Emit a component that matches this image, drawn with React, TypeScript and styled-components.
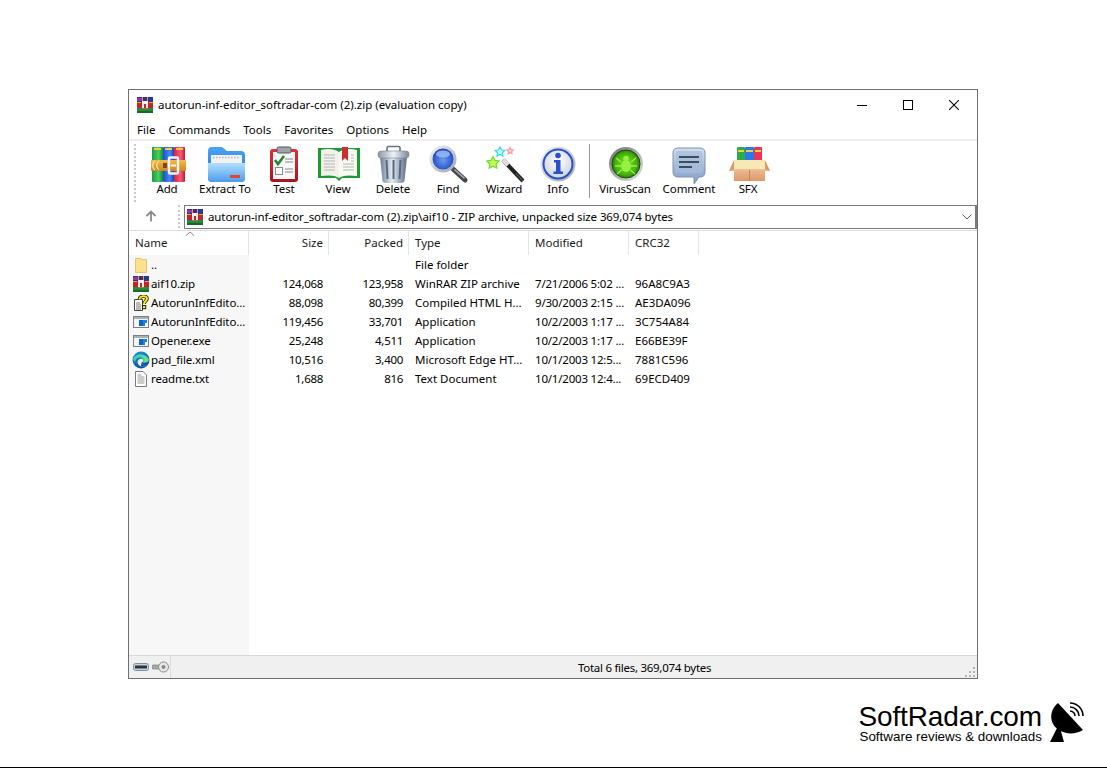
import React from "react";
import styled, { createGlobalStyle } from "styled-components";

const Global = createGlobalStyle`
  html, body { margin: 0; padding: 0; background: #fff; }
  body { font-family: "Noto Sans", "Open Sans", sans-serif; font-size: 11.5px; color: #000; }
  * { box-sizing: border-box; }
`;

const Page = styled.div`
  width: 1107px; height: 769px; padding: 89px 0 1px 128px;
  display: flex; flex-direction: column; overflow: hidden; background: #fff;
`;
const Win = styled.div`
  width: 850px; height: 590px; flex: none; border: 1px solid #6f6f6f;
  display: flex; flex-direction: column; background: #fff;
`;
const TitleBar = styled.div`
  height: 30px; flex: none; display: flex; align-items: center; padding-left: 8px;
`;
const TitleText = styled.div`
  margin-left: 5px; flex: 1; white-space: nowrap; padding-bottom: 1px;
`;
const WinBtn = styled.div`
  width: 46px; height: 30px; display: flex; align-items: center; justify-content: center;
`;
const MenuBar = styled.div`
  height: 19px; flex: none; display: flex; align-items: center; padding-left: 8px; gap: 13px;
`;
const Band = styled.div` height: 2px; flex: none; background: #f0f0f0; `;
const ToolBar = styled.div`
  height: 63px; flex: none; display: flex; padding-left: 5px; align-items: stretch;
`;
const Grip = styled.div`
  width: 2px; flex: none; border-left: 2px dotted #c8c8c8; margin: 3px 6px 2px 0;
`;
const ToolBtn = styled.div<{ $w: number }>`
  width: ${p => p.$w}px; flex: none; display: flex; flex-direction: column; align-items: center;
  padding-top: 4px; letter-spacing: -0.1px; white-space: nowrap;
  svg { display: block; flex: none; }
`;
const ToolLabel = styled.span` line-height: 16px; margin-top: -4px; `;
const ToolSep = styled.div`
  width: 1px; flex: none; margin: 3px 4px 6px 5px; background: #9a9a9a;
`;
const AddressRow = styled.div`
  height: 27px; flex: none; display: flex; align-items: stretch; border-bottom: 1px solid #dcdcdc;
`;
const UpCell = styled.div`
  width: 49px; flex: none; display: flex; align-items: center; justify-content: center; padding: 0 5px 2px 0;
`;
const AddrGrip = styled(Grip)` margin: 1px 4px 2px 0; `;
const AddrBox = styled.div`
  flex: 1; height: 24px; margin-top: 1px; border: 1px solid #7a7a7a; border-right-width: 2px;
  display: flex; align-items: center; padding-left: 2px; gap: 5px; background: #fff;
  letter-spacing: -0.1px; white-space: nowrap;
`;
const AddrText = styled.span` flex: 1; padding-bottom: 1px; `;
const AddrChevron = styled.svg` margin-right: 3px; `;

const COLS = "120px 80px 80px 120px 100px 70px";
const Header = styled.div`
  position: relative; height: 24px; flex: none; display: grid; grid-template-columns: ${COLS};
`;
const HCell = styled.div<{ $right?: boolean }>`
  display: flex; align-items: center; border-right: 1px solid #e5e5e5;
  justify-content: ${p => (p.$right ? "flex-end" : "flex-start")};
  padding: ${p => (p.$right ? "0 5px 2px 0" : "0 0 2px 6px")};
  color: #1a1a1a;
`;
const SortCaret = styled.svg` position: absolute; left: 56px; top: 0; `;
const Body = styled.div`
  flex: 1; background: linear-gradient(to right, #f7f7f7 120px, #fff 120px);
`;
const Row = styled.div`
  height: 19px; display: grid; grid-template-columns: ${COLS}; white-space: nowrap;
`;
const NameCell = styled.div`
  display: flex; align-items: center; padding-left: 4px; gap: 2px; overflow: hidden; letter-spacing: -0.12px;
  svg { flex: none; display: block; }
`;
const NumCell = styled.div`
  display: flex; align-items: center; justify-content: flex-end; padding-right: 6px; letter-spacing: -0.3px;
`;
const TextCell = styled.div<{ $tight?: boolean }>`
  display: flex; align-items: center; padding-left: 6px; overflow: hidden;
  letter-spacing: ${p => (p.$tight ? "-0.2px" : "0")};
`;
const Status = styled.div`
  height: 23px; flex: none; background: #f0f0f0; border-top: 1px solid #d9d9d9;
  display: flex; align-items: stretch; letter-spacing: -0.28px;
`;
const StatusIcons = styled.div`
  width: 42px; flex: none; display: flex; align-items: center; gap: 3px; padding-left: 4px;
  border-right: 1px solid #dcdcdc;
`;
const StatusText = styled.div`
  flex: 1; display: flex; align-items: center; padding-left: 407px; position: relative;
`;
const Resize = styled.svg` position: absolute; right: 1px; bottom: 1px; `;
const Brand = styled.div`
  align-self: flex-end; margin: 21px 22px 0 0; display: flex; align-items: flex-start; gap: 7px;
`;
const BrandText = styled.div`
  display: flex; flex-direction: column; padding-top: 3px;
  font-family: "Liberation Sans", Arial, sans-serif; color: #000;
`;
const BrandName = styled.div` font-size: 28px; line-height: 27px; letter-spacing: -0.13px; `;
const BrandTag = styled.div` font-size: 13.4px; line-height: 14px; margin-left: 1px; white-space: nowrap; `;
const Rule = styled.div` margin: auto 0 0 -128px; height: 1px; background: #000; flex: none; `;

const RarSmall = () => (
  <svg width="16" height="16" viewBox="0 0 16 16">
    <rect x="0" y="0" width="16" height="5" fill="#3c2a8c" />
    <rect x="0" y="1" width="5" height="3" fill="#8a3aa8" />
    <rect x="11" y="1" width="5" height="3" fill="#1d3f96" />
    <rect x="0" y="5" width="16" height="6" fill="#c8202c" />
    <rect x="0" y="5" width="4" height="1" fill="#e8b020" />
    <rect x="12" y="5" width="4" height="1" fill="#e8b020" />
    <rect x="0" y="11" width="16" height="5" fill="#2a8a3a" />
    <rect x="0" y="14" width="16" height="2" fill="#156a28" />
    <rect x="5" y="4" width="6" height="7" fill="#f0f0f0" />
    <rect x="7" y="7" width="2" height="4" fill="#c8202c" />
    <rect x="5" y="0" width="1" height="4" fill="#e0a030" />
    <rect x="10" y="0" width="1" height="4" fill="#e0a030" />
    <rect x="5" y="11" width="6" height="1" fill="#a08040" />
  </svg>
);
const FolderSmall = () => (
  <svg width="16" height="16" viewBox="0 0 16 16" style={{ marginLeft: 2, marginRight: -2 }}>
    <path d="M0.5 1.5 H6 L7.5 2.5 H11.5 V15.5 H0.5Z" fill="#fce28e" stroke="#e6c66a" />
  </svg>
);
const ChmSmall = () => (
  <svg width="16" height="16" viewBox="0 0 16 16">
    <path d="M1.5 4.5 H9.5 V15.5 H1.5Z" fill="#fff" stroke="#444" />
    <path d="M3 8h4M3 10h5M3 12h5M3 14h5" stroke="#777" />
    <path d="M6.5 4.5 C6 0.5 14 0 14 3.5 C14 6 11 6 11 9" fill="none" stroke="#2a2400" strokeWidth="3.6" />
    <path d="M6.5 4.5 C6 0.5 14 0 14 3.5 C14 6 11 6 11 9" fill="none" stroke="#ffe81c" strokeWidth="2" />
    <rect x="9.5" y="10.5" width="3.2" height="3.2" fill="#ffe81c" stroke="#2a2400" />
  </svg>
);
const ExeSmall = () => (
  <svg width="16" height="16" viewBox="0 0 16 16">
    <rect x="0.5" y="2.5" width="15" height="11" fill="#f4f6f8" stroke="#7a8088" />
    <rect x="1" y="3" width="14" height="2" fill="#a8b0b8" />
    <rect x="6" y="6" width="4" height="6" fill="#0f62c8" />
    <rect x="10" y="6" width="4" height="3" fill="#1f80e0" />
    <rect x="10" y="9" width="2" height="3" fill="#1f80e0" />
  </svg>
);
const EdgeSmall = () => (
  <svg width="18" height="18" viewBox="0 0 18 18" style={{ marginLeft: -1, marginRight: -1 }}>
    <defs>
      <linearGradient id="edgeA" x1="0" y1="0" x2="0.6" y2="1">
        <stop offset="0" stopColor="#1ea0d8" />
        <stop offset="1" stopColor="#0a4a9e" />
      </linearGradient>
      <linearGradient id="edgeT" x1="0" y1="0" x2="1" y2="0.6">
        <stop offset="0" stopColor="#2fc8c0" />
        <stop offset="1" stopColor="#6fe08a" />
      </linearGradient>
    </defs>
    <circle cx="9" cy="9" r="8.5" fill="url(#edgeA)" />
    <path d="M1 8 C3 2 13 1.5 16.8 8 C17.3 11 14 12 10.5 11.5 C12.5 9 11 6.5 8 6.5 C5 6.5 3 8.5 3 11Z" fill="url(#edgeT)" />
    <path d="M5.5 11 C6 8 9.5 7 11 8.5 C11.5 10 10.5 11 9.6 11.5 C9.5 14 12.5 15 15 14 C12.5 16.6 6 16 5.5 11Z" fill="#e4f6fc" />
    <path d="M9.6 11.5 C9.5 14 12.5 15 15 14 C13.5 15.6 11 16 9 15Z" fill="#0a3f8c" />
  </svg>
);
const TxtSmall = () => (
  <svg width="16" height="16" viewBox="0 0 16 16">
    <path d="M2.5 0.5 H10 L13.5 4 V15.5 H2.5Z" fill="#fff" stroke="#7a7a7a" />
    <path d="M4.5 4h4M4.5 6h7M4.5 8h7M4.5 10h7M4.5 12h7" stroke="#9a9a9a" />
  </svg>
);

const AddIcon = () => (
  <svg width="44" height="40" viewBox="0 0 44 40">
    <defs>
      <linearGradient id="addG" x1="0" y1="0" x2="1" y2="0"><stop offset="0" stopColor="#1f9a3c" /><stop offset="0.6" stopColor="#48d060" /><stop offset="1" stopColor="#178a30" /></linearGradient>
      <linearGradient id="addB" x1="0" y1="0" x2="1" y2="0"><stop offset="0" stopColor="#1b4fd8" /><stop offset="0.6" stopColor="#4488f4" /><stop offset="1" stopColor="#1644c0" /></linearGradient>
      <linearGradient id="addR" x1="0" y1="0" x2="1" y2="0"><stop offset="0" stopColor="#d8203f" /><stop offset="0.6" stopColor="#f85a78" /><stop offset="1" stopColor="#c01a34" /></linearGradient>
      <linearGradient id="addY" x1="0" y1="0" x2="0" y2="1"><stop offset="0" stopColor="#f4bc4c" /><stop offset="1" stopColor="#cc8620" /></linearGradient>
    </defs>
    <rect x="7" y="2" width="11" height="35" rx="1" fill="url(#addG)" />
    <rect x="18" y="2" width="11" height="35" rx="1" fill="url(#addB)" />
    <rect x="29" y="2" width="11" height="35" rx="1" fill="url(#addR)" />
    <path d="M9 4h7M20 4h7M31 4h7" stroke="#f0d040" strokeWidth="2" />
    <rect x="6" y="15" width="35" height="11" rx="1" fill="url(#addY)" />
    <path d="M10 16 C7 18 7 23 10 25 M14 16 C11 18 11 23 14 25" fill="none" stroke="#ffe2a0" strokeWidth="1.4" />
    <rect x="18" y="18" width="4" height="5" fill="#7a4a10" />
    <rect x="24" y="12.5" width="9" height="16" rx="1" fill="none" stroke="#f6f6f6" strokeWidth="2.4" />
    <rect x="26" y="19.5" width="5" height="2" fill="#f6f6f6" />
  </svg>
);
const ExtractIcon = () => (
  <svg width="44" height="40" viewBox="0 0 44 40">
    <defs>
      <linearGradient id="exF" x1="0" y1="0" x2="0" y2="1"><stop offset="0" stopColor="#b4e0fc" /><stop offset="1" stopColor="#4a9cec" /></linearGradient>
      <linearGradient id="exB" x1="0" y1="0" x2="0" y2="1"><stop offset="0" stopColor="#4aa4f4" /><stop offset="1" stopColor="#1c70d8" /></linearGradient>
    </defs>
    <path d="M5 6 Q5 2 9 2 H19 L24 6 H38 Q42 6 42 10 V33 Q42 37 38 37 H9 Q5 37 5 33Z" fill="url(#exB)" />
    <rect x="8" y="10" width="31" height="9" fill="#f0f2f6" />
    <path d="M10 12.5H37" stroke="#b0b8c4" strokeDasharray="1.5 1.5" strokeWidth="1.4" />
    <path d="M5 18 H42 V33 Q42 37 38 37 H9 Q5 37 5 33Z" fill="url(#exF)" />
    <rect x="27" y="30" width="10" height="3" fill="#e0452e" />
  </svg>
);
const TestIcon = () => (
  <svg width="44" height="40" viewBox="0 0 44 40">
    <defs><linearGradient id="tsR" x1="0" y1="0" x2="0" y2="1"><stop offset="0" stopColor="#e03038" /><stop offset="1" stopColor="#a8141c" /></linearGradient></defs>
    <rect x="8" y="4" width="28" height="33" rx="3" fill="url(#tsR)" />
    <rect x="11" y="7" width="22" height="27" fill="#f8f8f8" />
    <rect x="15" y="2" width="14" height="6" rx="1.5" fill="#a0a4a8" stroke="#55585c" />
    <path d="M13 15 L16 19 L22 11" fill="none" stroke="#1f8a38" strokeWidth="2.6" />
    <path d="M23 14h8M23 17h8M23 24h8M23 27h8" stroke="#8a8a8a" />
    <rect x="13.5" y="22.5" width="7" height="7" fill="#fff" stroke="#8a8a8a" />
  </svg>
);
const ViewIcon = () => (
  <svg width="44" height="40" viewBox="0 0 44 40">
    <path d="M2 3 H44 V33 H26 L23 36 L20 33 H2Z" fill="#1e9a34" />
    <path d="M5 5 C12 3 19 4 23 7 V33 C19 30 12 30 5 31Z" fill="#f2f2ea" />
    <path d="M41 5 C34 3 27 4 23 7 V33 C27 30 34 30 41 31Z" fill="#fafaf4" />
    <path d="M8 10h11M8 13h11M8 16h11M8 19h11M8 22h11M8 25h11M27 19h11M27 22h11M27 25h11M35 10h3M35 13h3M35 16h3" stroke="#b4b4b4" strokeWidth="1.1" />
    <path d="M26 2 H32 V16 L29 13 L26 16Z" fill="#d02c30" />
  </svg>
);
const DeleteIcon = () => (
  <svg width="44" height="40" viewBox="0 0 44 40">
    <defs>
      <linearGradient id="dlB" x1="0" y1="0" x2="1" y2="0"><stop offset="0" stopColor="#6e8098" /><stop offset="0.45" stopColor="#e4eaf2" /><stop offset="1" stopColor="#5c6e86" /></linearGradient>
      <linearGradient id="dlL" x1="0" y1="0" x2="1" y2="0"><stop offset="0" stopColor="#8a96a6" /><stop offset="0.5" stopColor="#f0f2f6" /><stop offset="1" stopColor="#7a8696" /></linearGradient>
    </defs>
    <rect x="16" y="1.5" width="13" height="6" rx="1.5" fill="none" stroke="#6a7484" strokeWidth="1.6" />
    <path d="M9 12 H36 L33.5 36 Q33 38 30 38 H15 Q12 38 11.5 36Z" fill="url(#dlB)" />
    <path d="M15.5 15 L16.5 34M22.5 15V34M29.5 15 L28.5 34" stroke="#5a6a80" strokeWidth="2" />
    <rect x="7" y="6" width="31" height="7" rx="3" fill="url(#dlL)" stroke="#7a8696" strokeWidth="0.6" />
  </svg>
);
const FindIcon = () => (
  <svg width="44" height="40" viewBox="0 0 44 40">
    <defs>
      <radialGradient id="fdL" cx="0.5" cy="0.55" r="0.6"><stop offset="0" stopColor="#6c9cf0" /><stop offset="0.75" stopColor="#2c58c8" /><stop offset="1" stopColor="#1c3a98" /></radialGradient>
      <linearGradient id="fdR" x1="0" y1="0" x2="1" y2="1"><stop offset="0" stopColor="#f4f6f8" /><stop offset="1" stopColor="#9aa4b0" /></linearGradient>
    </defs>
    <path d="M27 24 L39 35" stroke="#44484e" strokeWidth="5" strokeLinecap="round" />
    <path d="M29 25 L38 33" stroke="#a8acb0" strokeWidth="1.6" strokeLinecap="round" />
    <circle cx="17" cy="14" r="13.5" fill="url(#fdR)" />
    <circle cx="17" cy="14" r="10.5" fill="url(#fdL)" />
    <ellipse cx="17" cy="9" rx="7" ry="3.6" fill="#a8c4f8" opacity="0.75" />
  </svg>
);
const Star = ({ cx, cy, r, fill, stroke }: { cx: number; cy: number; r: number; fill: string; stroke: string }) => {
  const pts = Array.from({ length: 10 }, (_, i) => {
    const a = -Math.PI / 2 + (i * Math.PI) / 5;
    const rr = i % 2 ? r * 0.5 : r;
    return `${(cx + rr * Math.cos(a)).toFixed(2)},${(cy + rr * Math.sin(a)).toFixed(2)}`;
  }).join(" ");
  return <polygon points={pts} fill={fill} stroke={stroke} strokeWidth="1.2" />;
};
const WizardIcon = () => (
  <svg width="44" height="40" viewBox="0 0 44 40">
    <path d="M21 15 L41 36" stroke="#222" strokeWidth="4" />
    <path d="M21 15 L26 20.2" stroke="#e0e0e0" strokeWidth="4" />
    <path d="M34 28.5 L41 36" stroke="#555" strokeWidth="1.2" />
    <Star cx={11} cy={18} r={6.5} fill="#c8f860" stroke="#68e028" />
    <Star cx={18} cy={7} r={5} fill="#c8fcff" stroke="#30d8f0" />
    <Star cx={28} cy={6} r={3.4} fill="#fcd8dc" stroke="#f49aa4" />
  </svg>
);
const InfoIcon = () => (
  <svg width="44" height="40" viewBox="0 0 44 40">
    <defs>
      <linearGradient id="inS" x1="0" y1="0" x2="1" y2="1"><stop offset="0" stopColor="#f4f4f4" /><stop offset="1" stopColor="#a4a8ae" /></linearGradient>
      <radialGradient id="inI" cx="0.5" cy="0.4" r="0.7"><stop offset="0" stopColor="#ffffff" /><stop offset="1" stopColor="#c4ccd8" /></radialGradient>
    </defs>
    <circle cx="22" cy="19" r="17.5" fill="url(#inS)" />
    <circle cx="22" cy="19" r="14.5" fill="url(#inI)" stroke="#2a50c8" strokeWidth="2" />
    <circle cx="22" cy="10.5" r="2.8" fill="#2850d0" />
    <path d="M18 15 H24.5 V26.5 H27 V29 H17.5 V26.5 H20 V17.5 H18Z" fill="#2850d0" />
  </svg>
);
const VirusIcon = () => (
  <svg width="44" height="40" viewBox="0 0 44 40">
    <defs>
      <linearGradient id="vrS" x1="0" y1="0" x2="1" y2="1"><stop offset="0" stopColor="#6a6e72" /><stop offset="1" stopColor="#e4e6e8" /></linearGradient>
      <radialGradient id="vrG" cx="0.5" cy="0.5" r="0.55"><stop offset="0" stopColor="#7ee81c" /><stop offset="0.7" stopColor="#44b010" /><stop offset="1" stopColor="#236808" /></radialGradient>
    </defs>
    <circle cx="23" cy="19" r="17" fill="url(#vrS)" />
    <circle cx="23" cy="19" r="14" fill="url(#vrG)" stroke="#1c4a08" />
    <ellipse cx="23" cy="21" rx="5" ry="6" fill="#98f040" />
    <circle cx="23" cy="13.5" r="2.8" fill="#98f040" />
    <path d="M18 17 L13 13 M18 21 H12 M18.5 25 L14 29 M28 17 L33 13 M28 21 H34 M27.5 25 L32 29" stroke="#98f040" strokeWidth="1.4" />
  </svg>
);
const CommentIcon = () => (
  <svg width="44" height="40" viewBox="0 0 44 40">
    <defs><linearGradient id="cmB" x1="0" y1="0" x2="0" y2="1"><stop offset="0" stopColor="#d0ddec" /><stop offset="1" stopColor="#7c9cc4" /></linearGradient></defs>
    <path d="M11 3 H33 Q38 3 38 8 V27 Q38 32 33 32 H32 L27 39 V32 H11 Q6 32 6 27 V8 Q6 3 11 3Z" fill="url(#cmB)" stroke="#7c94b4" />
    <path d="M11 6 H33 Q35 6 35 8 V26 Q35 28 33 28 H11 Q9 28 9 26 V8 Q9 6 11 6Z" fill="#a6bcd8" opacity="0.7" />
    <path d="M12 12H32M12 17H32M12 22H25" stroke="#3c4c64" strokeWidth="1.8" />
  </svg>
);
const SfxIcon = () => (
  <svg width="44" height="40" viewBox="0 0 44 40">
    <defs>
      <linearGradient id="sfB" x1="0" y1="0" x2="0" y2="1"><stop offset="0" stopColor="#f0b890" /><stop offset="1" stopColor="#dc9a6c" /></linearGradient>
    </defs>
    <rect x="11" y="2" width="8" height="16" rx="1" fill="#2cae44" />
    <rect x="19" y="2" width="9" height="16" rx="1" fill="#2c78e8" />
    <rect x="28" y="2" width="8" height="16" rx="1" fill="#ec3458" />
    <path d="M12 6h6M20 6h7M29 6h6" stroke="#f0d040" strokeWidth="2" />
    <path d="M8 15 H39 V25 H8Z" fill="#f8e8b8" />
    <path d="M8 15 L3 26 H8Z M39 15 L44 26 H39Z" fill="#d89868" />
    <path d="M8 24 H39 V36 H8Z" fill="url(#sfB)" />
    <path d="M4 26 H43 L39 24 H8Z" fill="#eebc90" />
    <path d="M23.5 25V36" stroke="#c4875c" />
  </svg>
);

const tools: [string, number, React.FC][] = [
  ["Add", 50, AddIcon], ["Extract To", 66, ExtractIcon], ["Test", 52, TestIcon], ["View", 56, ViewIcon],
  ["Delete", 54, DeleteIcon], ["Find", 56, FindIcon], ["Wizard", 56, WizardIcon], ["Info", 52, InfoIcon],
];
const tools2: [string, number, React.FC][] = [
  ["VirusScan", 62, VirusIcon], ["Comment", 66, CommentIcon], ["SFX", 52, SfxIcon],
];

const rows: [React.FC, string, string, string, string, string, string][] = [
  [FolderSmall, "..", "", "", "File folder", "", ""],
  [RarSmall, "aif10.zip", "124,068", "123,958", "WinRAR ZIP archive", "7/21/2006 5:02 ...", "96A8C9A3"],
  [ChmSmall, "AutorunInfEdito...", "88,098", "80,399", "Compiled HTML H...", "9/30/2003 2:15 ...", "AE3DA096"],
  [ExeSmall, "AutorunInfEdito...", "119,456", "33,701", "Application", "10/2/2003 1:17 ...", "3C754A84"],
  [ExeSmall, "Opener.exe", "25,248", "4,511", "Application", "10/2/2003 1:17 ...", "E66BE39F"],
  [EdgeSmall, "pad_file.xml", "10,516", "3,400", "Microsoft Edge HT...", "10/1/2003 12:5...", "7881C596"],
  [TxtSmall, "readme.txt", "1,688", "816", "Text Document", "10/1/2003 12:4...", "69ECD409"],
];

export default function App() {
  return (
    <Page>
      <Global />
      <Win>
        <TitleBar>
          <RarSmall />
          <TitleText>autorun-inf-editor_softradar-com (2).zip (evaluation copy)</TitleText>
          <WinBtn><svg width="10" height="10" viewBox="0 0 10 10"><path d="M0 5.5H10" stroke="#000" /></svg></WinBtn>
          <WinBtn><svg width="10" height="10" viewBox="0 0 10 10"><rect x="0.5" y="0.5" width="9" height="9" fill="none" stroke="#000" /></svg></WinBtn>
          <WinBtn><svg width="10" height="10" viewBox="0 0 10 10"><path d="M0 0L10 10M10 0L0 10" stroke="#000" strokeWidth="1.05" /></svg></WinBtn>
        </TitleBar>
        <MenuBar>
          {["File", "Commands", "Tools", "Favorites", "Options", "Help"].map(m => <span key={m}>{m}</span>)}
        </MenuBar>
        <Band />
        <ToolBar>
          <Grip />
          {tools.map(([label, w, Icon]) => (
            <ToolBtn key={label} $w={w}><Icon /><ToolLabel>{label}</ToolLabel></ToolBtn>
          ))}
          <ToolSep />
          {tools2.map(([label, w, Icon]) => (
            <ToolBtn key={label} $w={w}><Icon /><ToolLabel>{label}</ToolLabel></ToolBtn>
          ))}
        </ToolBar>
        <AddressRow>
          <UpCell>
            <svg width="12" height="12" viewBox="0 0 12 12"><path d="M6 11.5V1.5M1.5 6L6 1.5L10.5 6" fill="none" stroke="#8a8a8a" strokeWidth="1.8" /></svg>
          </UpCell>
          <AddrGrip />
          <AddrBox>
            <RarSmall />
            <AddrText>autorun-inf-editor_softradar-com (2).zip\aif10 - ZIP archive, unpacked size 369,074 bytes</AddrText>
            <AddrChevron width="10" height="6" viewBox="0 0 10 6"><path d="M0.5 0.5L5 5L9.5 0.5" fill="none" stroke="#555" /></AddrChevron>
          </AddrBox>
        </AddressRow>
        <Header>
          <HCell>Name</HCell>
          <HCell $right>Size</HCell>
          <HCell $right>Packed</HCell>
          <HCell>Type</HCell>
          <HCell>Modified</HCell>
          <HCell>CRC32</HCell>
          <SortCaret width="10" height="5" viewBox="0 0 10 5"><path d="M1 4.5L5 1L9 4.5" fill="none" stroke="#8a8a8a" /></SortCaret>
        </Header>
        <Body>
          {rows.map(([Icon, name, size, packed, type, modified, crc], i) => (
            <Row key={i}>
              <NameCell><Icon /><span>{name}</span></NameCell>
              <NumCell>{size}</NumCell>
              <NumCell>{packed}</NumCell>
              <TextCell>{type}</TextCell>
              <TextCell $tight>{modified}</TextCell>
              <TextCell>{crc}</TextCell>
            </Row>
          ))}
        </Body>
        <Status>
          <StatusIcons>
            <svg width="16" height="10" viewBox="0 0 16 10"><rect x="0.5" y="1.5" width="15" height="7" rx="2" fill="#c8d4dc" stroke="#6f93a8" /><rect x="2" y="3.5" width="12" height="3" fill="#333" /></svg>
            <svg width="17" height="12" viewBox="0 0 17 12"><rect x="0" y="4" width="10" height="4" rx="1" fill="#a8a8a8" stroke="#777" strokeWidth="0.6" /><circle cx="11.5" cy="6" r="5" fill="#e8e8e8" stroke="#8a8a8a" /><circle cx="11.5" cy="6" r="2" fill="#888" /></svg>
          </StatusIcons>
          <StatusText>
            Total 6 files, 369,074 bytes
            <Resize width="11" height="10" viewBox="0 0 11 10">
              {[[8, 0], [4, 4], [8, 4], [0, 8], [4, 8], [8, 8]].map(([x, y]) => <rect key={`${x}-${y}`} x={x} y={y} width="2" height="2" fill="#b4b4b4" />)}
            </Resize>
          </StatusText>
        </Status>
      </Win>
      <Brand>
        <BrandText>
          <BrandName>SoftRadar.com</BrandName>
          <BrandTag>Software reviews &amp; downloads</BrandTag>
        </BrandText>
        <svg width="36" height="44" viewBox="0 0 36 44">
          <path d="M9 3 L34 30 C24 36 10 34 4 24 C0 16 3 8 9 3Z" fill="#000" />
          <path d="M1 42 H15 L11 28 H8Z" fill="#000" />
          <path d="M21 11A5 5 0 0 1 26 16M21 7A9 9 0 0 1 30 16M21 3A13 13 0 0 1 34 16" fill="none" stroke="#000" strokeWidth="1.6" />
        </svg>
      </Brand>
      <Rule />
    </Page>
  );
}
